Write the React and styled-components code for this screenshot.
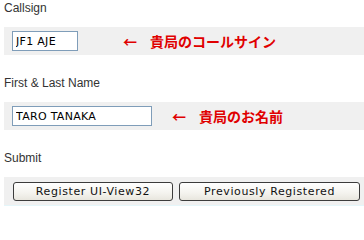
import styled, { createGlobalStyle } from 'styled-components';

const GlobalStyle = createGlobalStyle`
  body {
    margin: 0;
    background: #fff;
    font-family: "Liberation Sans", Arial, sans-serif;
  }
`;

const Page = styled.div`
  width: 364px;
  height: 206px;
  overflow: hidden;
  padding-left: 4px;
  box-sizing: border-box;
`;

const Section = styled.div`
  margin-bottom: 20px;
`;

const Label = styled.div`
  font-size: 12px;
  line-height: 16px;
  height: 27px;
  color: #333;
`;

const Band = styled.div`
  display: flex;
  align-items: center;
  height: 28px;
  padding-left: 8px;
  background: #f0f0f0;
`;

const TextInput = styled.input`
  box-sizing: border-box;
  width: ${(p) => p.$w}px;
  height: 20px;
  margin: 0;
  padding: 0 3px;
  border: 1px solid #7f9db9;
  background: #fff;
  font-family: "DejaVu Sans", sans-serif;
  font-size: 11px;
  letter-spacing: 0.3px;
  color: #000;
  outline: none;
`;

const Note = styled.span`
  display: flex;
  align-items: center;
  margin-left: ${(p) => p.$gap}px;
  color: #e00000;
  font-family: "Noto Sans CJK JP", sans-serif;
  font-weight: 700;
  font-size: 14px;
  line-height: 20px;
`;

const Arrow = styled.span`
  margin-right: 13px;
  font-size: 14px;
`;

const ButtonBand = styled(Band)`
  align-items: flex-start;
  padding-top: 5px;
  padding-left: 9px;
  height: 23px;
  gap: 6px;
  border-bottom: 3px solid #e4f6fa;
`;

const Button = styled.button`
  box-sizing: border-box;
  width: ${(p) => p.$w}px;
  height: 19px;
  margin: 0;
  padding: 0;
  border: 1px solid #3c3c3c;
  border-radius: 3px;
  background: linear-gradient(#ffffff, #f4f3ee 60%, #e8e6de);
  font-family: "DejaVu Sans", sans-serif;
  font-size: 11px;
  letter-spacing: 0.6px;
  color: #111;
  line-height: 17px;
`;

export default function App() {
  return (
    <>
      <GlobalStyle />
      <Page>
        <Section>
          <Label>Callsign</Label>
          <Band>
            <TextInput $w={66} defaultValue="JF1 AJE" />
            <Note $gap={45}>
              <Arrow>←</Arrow>貴局のコールサイン
            </Note>
          </Band>
        </Section>
        <Section>
          <Label>First &amp; Last Name</Label>
          <Band>
            <TextInput $w={140} defaultValue="TARO TANAKA" />
            <Note $gap={20}>
              <Arrow>←</Arrow>貴局のお名前
            </Note>
          </Band>
        </Section>
        <Section>
          <Label>Submit</Label>
          <ButtonBand>
            <Button $w={160}>Register UI-View32</Button>
            <Button $w={181}>Previously Registered</Button>
          </ButtonBand>
        </Section>
      </Page>
    </>
  );
}
